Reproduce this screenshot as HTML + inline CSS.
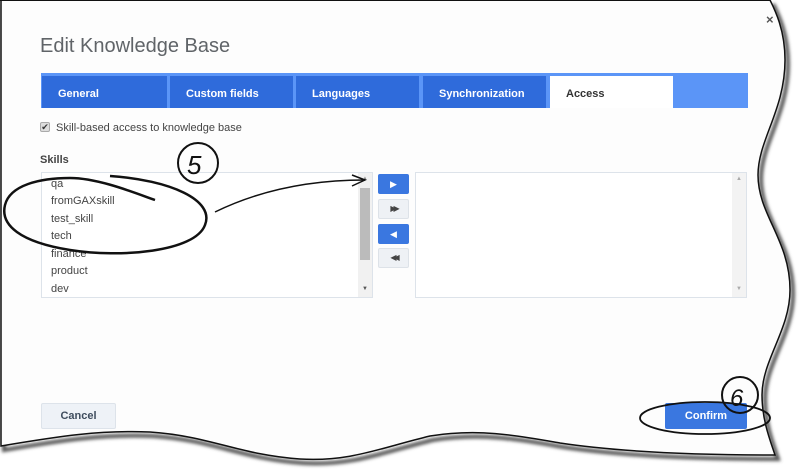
<!DOCTYPE html>
<html><head><meta charset="utf-8"><style>
*{margin:0;padding:0;box-sizing:border-box}
body{width:800px;height:476px;background:#fff;position:relative;overflow:hidden;font-family:"Liberation Sans",sans-serif}
.a{position:absolute}
.title{left:40px;top:35px;font-size:20px;color:#606468}
.tabbar{left:41px;top:73px;width:707px;height:35px;background:#5b95f7}
.tab{position:absolute;top:3px;height:32px;background:#2f6bdb;color:#fff;font-size:11px;font-weight:bold;padding:12px 0 0 16px}
.list{border:1px solid #dde3ea;background:#fff;height:126px}
.item{position:absolute;left:9px;font-size:11px;color:#444}
.btn{position:absolute;left:378px;width:31px;height:20px;border-radius:2px}
.blue{background:#3a77e0}
.grey{background:#eef1f5;border:1px solid #dde2e8}
</style></head><body>
<svg class="a" style="left:0;top:0" width="800" height="476">
<defs><filter id="s"><feGaussianBlur stdDeviation="1.5"/></filter></defs>
<path d="M1,0 L1,446 C60,436 100,430 150,432 C210,436 240,455 300,459 C350,462 380,448 430,436 C480,428 520,436 560,443 C620,452 700,455 775,455 C770,440 762,420 762,395 C762,360 790,330 790,290 C790,240 758,215 758,175 C758,140 785,110 785,60 C785,30 775,10 770,0" fill="none" stroke="#555" stroke-width="4" filter="url(#s)" transform="translate(3,4)"/>
<path d="M1,0 L1,446 C60,436 100,430 150,432 C210,436 240,455 300,459 C350,462 380,448 430,436 C480,428 520,436 560,443 C620,452 700,455 775,455 C770,440 762,420 762,395 C762,360 790,330 790,290 C790,240 758,215 758,175 C758,140 785,110 785,60 C785,30 775,10 770,0 Z" fill="#fdfdfd" stroke="#111" stroke-width="1.5"/>
<line x1="0" y1="0.5" x2="770" y2="0.5" stroke="#111"/>
</svg>
<div class="a title">Edit Knowledge Base</div>
<div class="a" style="left:766px;top:12px;font-size:13px;color:#555;font-weight:bold">×</div>
<div class="a tabbar">
<div class="tab" style="left:1px;width:125px">General</div>
<div class="tab" style="left:129px;width:123px">Custom fields</div>
<div class="tab" style="left:255px;width:123px">Languages</div>
<div class="tab" style="left:382px;width:123px">Synchronization</div>
<div class="tab" style="left:509px;width:123px;background:#fff;color:#333">Access</div>
</div>
<div class="a" style="left:40px;top:122px;width:10px;height:10px;background:#ddd;border:1px solid #aaa;border-radius:2px;font-size:9px;line-height:8px;text-align:center;color:#333">✔</div>
<div class="a" style="left:56px;top:122px;font-size:11px;color:#444">Skill-based access to knowledge base</div>
<div class="a" style="left:40px;top:154px;font-size:11px;font-weight:bold;color:#444">Skills</div>
<div class="a list" style="left:41px;top:172px;width:332px">
<div class="item" style="top:5px">qa</div>
<div class="item" style="top:22px">fromGAXskill</div>
<div class="item" style="top:40px">test_skill</div>
<div class="item" style="top:57px">tech</div>
<div class="item" style="top:75px">finance</div>
<div class="item" style="top:92px">product</div>
<div class="item" style="top:110px">dev</div>
<div class="a" style="right:0;top:0;width:14px;height:124px;background:#f1f1f1"></div>
<div class="a" style="right:2px;top:15px;width:10px;height:72px;background:#bbb"></div>
<div class="a" style="right:4px;top:3px;font-size:6px;color:#888">▲</div>
<div class="a" style="right:4px;top:113px;font-size:6px;color:#555">▼</div>
</div>
<div class="btn blue" style="top:174px;color:#fff;font-size:9px;text-align:center;line-height:20px">▶</div>
<div class="btn grey" style="top:199px;color:#444;font-size:8px;text-align:center;line-height:18px;letter-spacing:-3px">▶▶</div>
<div class="btn blue" style="top:224px;color:#fff;font-size:9px;text-align:center;line-height:20px">◀</div>
<div class="btn grey" style="top:248px;color:#444;font-size:8px;text-align:center;line-height:18px;letter-spacing:-3px">◀◀</div>
<div class="a list" style="left:415px;top:172px;width:332px">
<div class="a" style="right:0;top:0;width:14px;height:124px;background:#f3f3f3"></div>
<div class="a" style="right:4px;top:3px;font-size:6px;color:#aaa">▲</div>
<div class="a" style="right:4px;top:113px;font-size:6px;color:#aaa">▼</div>
</div>
<div class="a" style="left:41px;top:403px;width:75px;height:26px;background:#eef2f7;border:1px solid #dde3ea;border-radius:2px;font-size:11px;font-weight:bold;color:#3f4d5e;text-align:center;line-height:24px">Cancel</div>
<div class="a" style="left:665px;top:403px;width:82px;height:26px;background:#3a77e0;border-radius:2px;font-size:11px;font-weight:bold;color:#fff;text-align:center;line-height:26px">Confirm</div>
<svg class="a" style="left:0;top:0" width="800" height="476">
<g fill="none" stroke="#111" stroke-width="2.5">
<path d="M110,176 C170,180 215,200 205,225 C195,252 120,258 70,250 C20,242 0,225 5,205 C10,185 40,178 70,178 C100,178 140,195 155,200" />
<path d="M215,212 C260,190 310,180 365,180" stroke-width="1.5"/>
<path d="M352,175 L365,180 L352,186" stroke-width="1.5"/>
<circle cx="198" cy="163" r="20" stroke-width="2"/>
<ellipse cx="705" cy="418" rx="65" ry="16" stroke-width="1.8"/>
<circle cx="740" cy="395" r="18" stroke-width="2"/>
</g>
<text x="187" y="174" font-family="Liberation Sans,sans-serif" font-size="26" font-style="italic" fill="#111">5</text>
<text x="730" y="406" font-family="Liberation Sans,sans-serif" font-size="24" font-style="italic" fill="#111">6</text>
</svg>
</body></html>
